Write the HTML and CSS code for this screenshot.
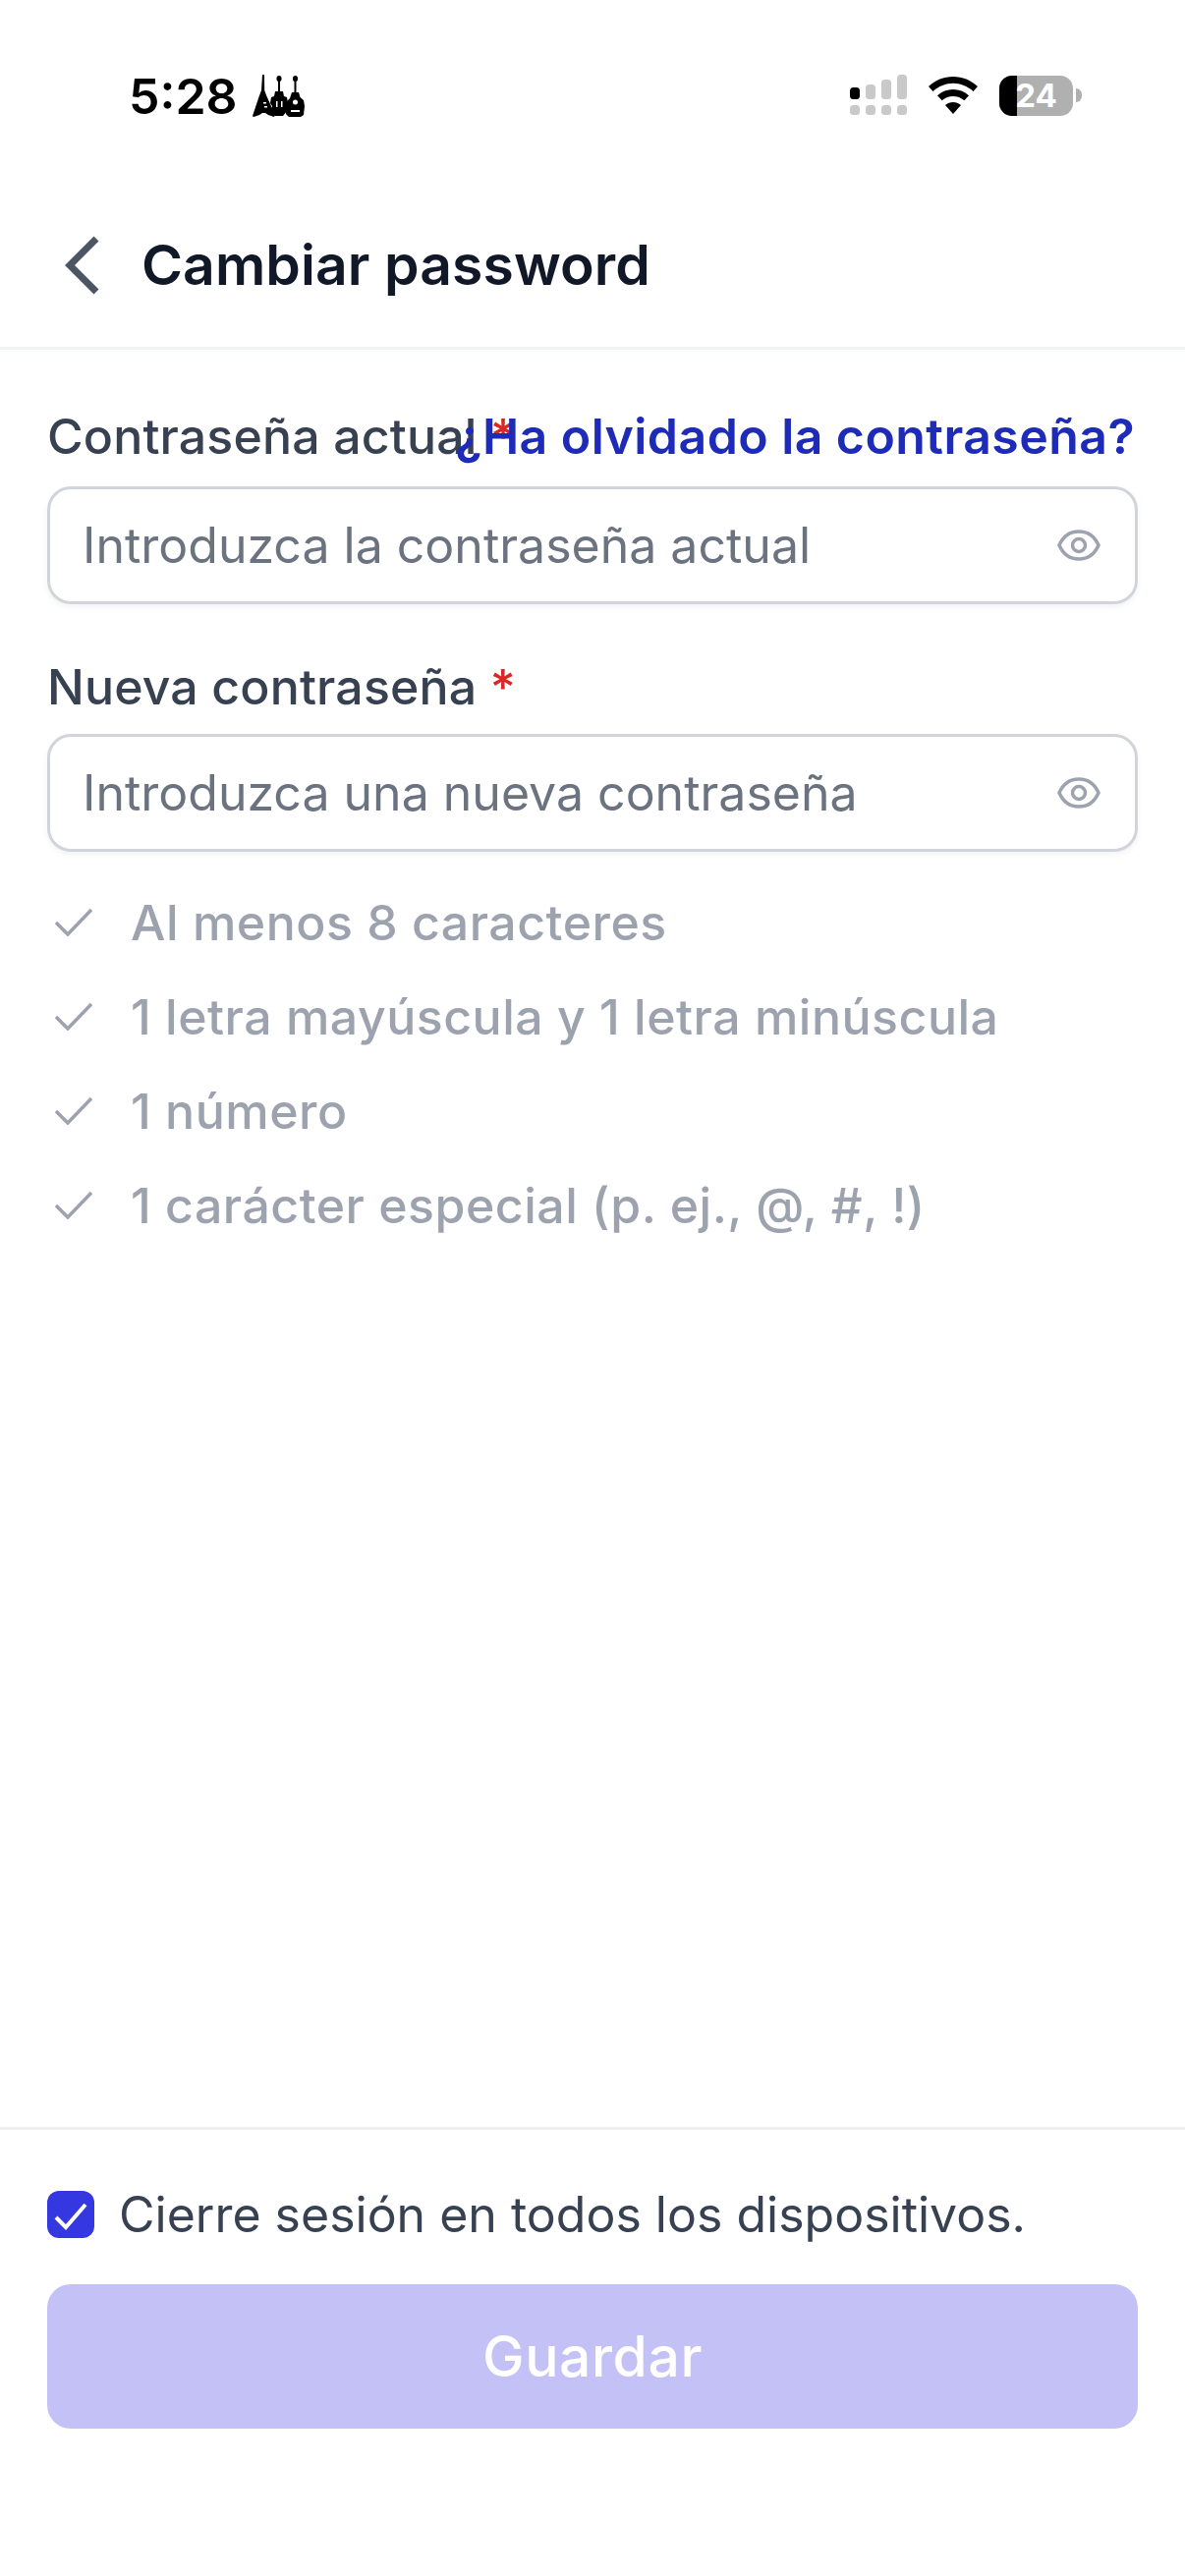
FILE: index.html
```html
<!DOCTYPE html>
<html lang="es">
<head>
<meta charset="utf-8">
<title>Cambiar password</title>
<link rel="stylesheet" href="styles.css">
</head>
<body>
<div class="page">
  <div class="status">
    <div class="status-left">
      <span class="time">5:28</span>
      <svg class="guitars" viewBox="0 0 54 44" width="54" height="44">
        <g fill="#000">
          <path d="M11 0l2 0 .2 16 1.800 5 9 20-1 2-6-2-3-2h-3l-3 2-6 2-1-1 6-18 3-8z"/>
          <rect x="25.500" y="1" width="5" height="6" rx="2.500"/>
          <rect x="27" y="4" width="2" height="16"/>
          <path d="M24 17h8l1 5 3 1 1 6-2 3 1 5-4 5h-8l-4-5 1-5-2-3 1-6 3-1z"/>
          <rect x="42" y="1" width="5" height="6" rx="2.500"/>
          <rect x="43.500" y="4" width="2" height="16"/>
          <path d="M41 18h7l1.500 5 3.500 3 1 6-1 9-3 2h-12l-3-3-1-7 2-6 3-3z"/>
        </g>
        <g fill="#fff">
          <rect x="40" y="36" width="9" height="2"/>
          <circle cx="44.500" cy="28" r="2.500"/>
          <rect x="25" y="27" width="1.500" height="6"/>
          <rect x="30" y="27" width="1.500" height="6"/>
          <rect x="12" y="28" width="3" height="1.500"/>
          <rect x="13" y="32" width="3" height="1.500"/>
        </g>
      </svg>
    </div>
    <div class="status-right">
      <svg class="signal" viewBox="0 0 58 42" width="58" height="42">
        <rect x="0" y="13" width="10" height="12" rx="3.500" fill="#000"/>
        <rect x="16" y="10" width="10" height="15" rx="3.500" fill="#c9c9c9"/>
        <rect x="32" y="5" width="10" height="20" rx="3.500" fill="#c9c9c9"/>
        <rect x="48" y="0" width="10" height="25" rx="3.500" fill="#c9c9c9"/>
        <rect x="0" y="31" width="10" height="10" rx="3.500" fill="#c9c9c9"/>
        <rect x="16" y="31" width="10" height="10" rx="3.500" fill="#c9c9c9"/>
        <rect x="32" y="31" width="10" height="10" rx="3.500" fill="#c9c9c9"/>
        <rect x="48" y="31" width="10" height="10" rx="3.500" fill="#c9c9c9"/>
      </svg>
      <svg class="wifi" viewBox="0 0 50 38" width="50" height="38">
        <path d="M25 0C15.500 0 7 3.600 0 10l4.500 5C10.500 9.800 17.500 6.800 25 6.800S39.500 9.800 45.500 15L50 10C43 3.600 34.500 0 25 0z" fill="#000"/>
        <path d="M25 13c-6 0-11.500 2.200-16 6.200l4.600 5C16.800 21.500 20.800 20 25 20s8.200 1.500 11.400 4.200l4.600-5C36.500 15.200 31 13 25 13z" fill="#000"/>
        <path d="M25 26c-3 0-5.700 1-8 3l8 9 8-9c-2.300-2-5-3-8-3z" fill="#000"/>
      </svg>
      <div class="battery">
        <div class="battery-body">
          <div class="battery-fill"></div>
          <span class="battery-text">24</span>
        </div>
        <div class="battery-tip"></div>
      </div>
    </div>
  </div>

  <header class="header">
    <svg class="back" viewBox="0 0 36 60" width="36" height="60">
      <path d="M33 3L6 30l27 27" fill="none" stroke="#4b5563" stroke-width="7"/>
    </svg>
    <h1 class="title">Cambiar password</h1>
  </header>

  <main class="form">
    <div class="label-row">
      <label class="label label-fill">Contraseña actual <span class="req">*</span></label>
      <a class="forgot">¿Ha olvidado la contraseña?</a>
    </div>
    <div class="field">
      <span class="placeholder">Introduzca la contraseña actual</span>
      <svg class="eye" viewBox="0 0 44 32" width="44" height="32">
        <path d="M2 16C6 7 13 2 22 2s16 5 20 14c-4 9-11 14-20 14S6 25 2 16z" fill="none" stroke="#9ca3af" stroke-width="3.500"/>
        <circle cx="22" cy="16" r="6.500" fill="none" stroke="#9ca3af" stroke-width="3.500"/>
      </svg>
    </div>

    <div class="label-row label-row-second">
      <label class="label">Nueva contraseña <span class="req">*</span></label>
    </div>
    <div class="field">
      <span class="placeholder">Introduzca una nueva contraseña</span>
      <svg class="eye" viewBox="0 0 44 32" width="44" height="32">
        <path d="M2 16C6 7 13 2 22 2s16 5 20 14c-4 9-11 14-20 14S6 25 2 16z" fill="none" stroke="#9ca3af" stroke-width="3.500"/>
        <circle cx="22" cy="16" r="6.500" fill="none" stroke="#9ca3af" stroke-width="3.500"/>
      </svg>
    </div>

    <ul class="rules">
      <li class="rule"><svg class="tick" viewBox="0 0 40 32" width="40" height="32"><path d="M2 16l12 12L38 3" fill="none" stroke="#9ca3af" stroke-width="3.500"/></svg><span>Al menos 8 caracteres</span></li>
      <li class="rule"><svg class="tick" viewBox="0 0 40 32" width="40" height="32"><path d="M2 16l12 12L38 3" fill="none" stroke="#9ca3af" stroke-width="3.500"/></svg><span>1 letra mayúscula y 1 letra minúscula</span></li>
      <li class="rule"><svg class="tick" viewBox="0 0 40 32" width="40" height="32"><path d="M2 16l12 12L38 3" fill="none" stroke="#9ca3af" stroke-width="3.500"/></svg><span>1 número</span></li>
      <li class="rule"><svg class="tick" viewBox="0 0 40 32" width="40" height="32"><path d="M2 16l12 12L38 3" fill="none" stroke="#9ca3af" stroke-width="3.500"/></svg><span>1 carácter especial (p. ej., @, #, !)</span></li>
    </ul>
  </main>

  <footer class="footer">
    <div class="check-row">
      <span class="checkbox">
        <svg viewBox="0 0 48 48" width="48" height="48"><path d="M9 27l10 10L39 14" fill="none" stroke="#fff" stroke-width="4"/></svg>
      </span>
      <span class="check-text">Cierre sesión en todos los dispositivos.</span>
    </div>
    <button class="save">Guardar</button>
  </footer>
</div>
</body>
</html>
```
FILE: styles.css
```css
* { box-sizing: border-box; }
html, body { margin: 0; padding: 0; background: #fff; }
body { font-family: Inter, "Liberation Sans", sans-serif; }
.page { width: 1206px; height: 2622px; display: flex; flex-direction: column; background: #fff; }

.status { height: 176px; flex: none; display: flex; justify-content: space-between; align-items: flex-start; padding: 71px 105px 0 131px; }
.status-left { display: flex; align-items: center; gap: 14px; }
.time { font-size: 50px; line-height: 54px; font-weight: 600; color: #000; }
.guitars { display: block; }
.status-right { display: flex; align-items: center; gap: 22px; margin-top: 5px; }
.signal, .wifi { display: block; }
.battery { display: flex; align-items: center; gap: 3px; }
.battery-body { position: relative; width: 75px; height: 41px; border-radius: 13px; background: #b0b0b0; overflow: hidden; display: flex; align-items: center; justify-content: center; }
.battery-fill { position: absolute; left: 0; top: 0; bottom: 0; width: 18px; background: #000; }
.battery-text { position: relative; font-size: 33px; font-weight: 700; color: #fff; line-height: 41px; }
.battery-tip { width: 6px; height: 14px; background: #b0b0b0; border-radius: 0 7px 7px 0; }

.header { height: 180px; flex: none; display: flex; align-items: center; padding: 10px 0 0 65px; gap: 43px; border-bottom: 3px solid #f1f2f4; }
.back { display: block; }
.title { margin: 0; font-size: 57px; line-height: 66px; font-weight: 600; color: #111827; letter-spacing: .1px; }

.form { flex: 1; padding: 58px 48px 0; }
.label-row { display: flex; align-items: center; height: 60px; margin-bottom: 21px; padding-right: 3px; }
.label-row-second { margin-top: 54px; margin-bottom: 18px; }
.label { font-size: 50px; line-height: 60px; font-weight: 500; color: #374151; white-space: nowrap; letter-spacing: .15px; }
.label-fill { flex: 1; min-width: 0; }
.req { color: #dc2626; }
.forgot { flex: none; font-size: 50px; line-height: 60px; font-weight: 600; color: #1e2bb8; white-space: nowrap; letter-spacing: .43px; }

.field { height: 120px; border: 3px solid #d1d5db; border-radius: 24px; background: #fff; box-shadow: 0 3px 6px rgba(16, 24, 40, .05); display: flex; align-items: center; justify-content: space-between; padding: 0 35px 0 33px; }
.placeholder { font-size: 50px; line-height: 60px; color: #6b7280; }
.eye { display: block; }

.rules { list-style: none; margin: 0; padding: 0; margin-top: 24px; }
.rule { height: 96px; display: flex; align-items: center; gap: 38px; padding-left: 7px; font-size: 50px; color: #9ca3af; font-weight: 500; letter-spacing: .5px; }
.tick { display: block; flex: none; }

.footer { height: 457px; flex: none; border-top: 3px solid #eeeff1; padding: 56px 48px 0; }
.check-row { display: flex; align-items: center; gap: 25px; height: 60px; margin-bottom: 41px; }
.checkbox { width: 48px; height: 48px; border-radius: 12px; background: #3538e0; display: block; }
.checkbox svg { display: block; }
.check-text { font-size: 50px; line-height: 60px; color: #374151; }
.save { display: block; width: 100%; height: 147px; border: 0; border-radius: 24px; background: #c3c1f5; color: #fff; font-family: inherit; font-size: 57px; font-weight: 500; letter-spacing: .6px; }
```
